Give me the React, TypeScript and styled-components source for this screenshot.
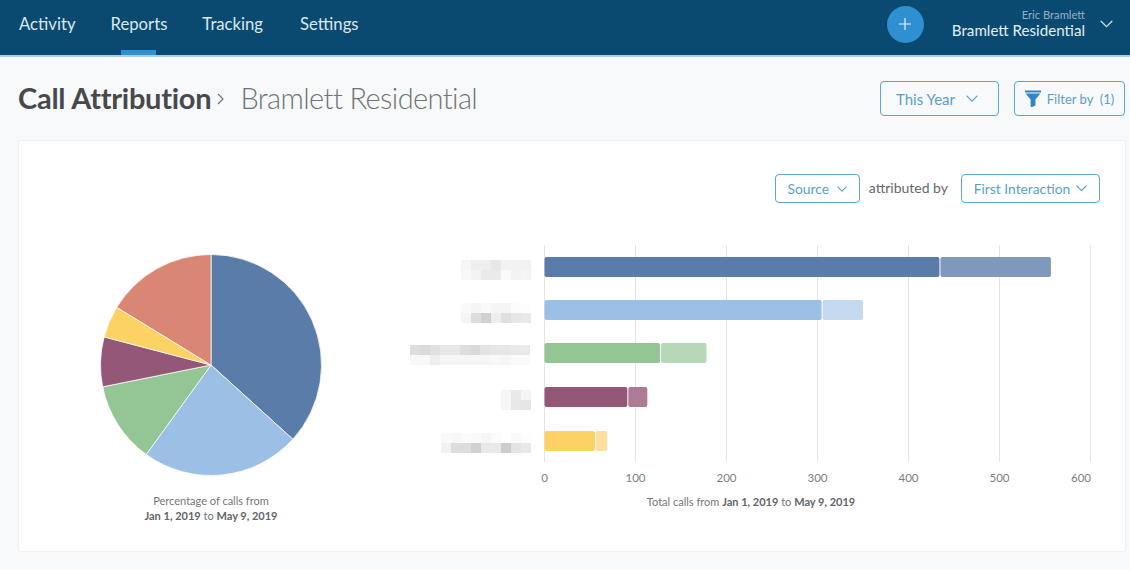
import React from "react";
import styled, { createGlobalStyle } from "styled-components";

const Global = createGlobalStyle`
  html, body { margin: 0; padding: 0; background: #f7f9fb; }
  body { font-family: "Lato", "Open Sans", sans-serif; overflow: hidden; }
`;

const Page = styled.div`
  width: 1130px;
  height: 570px;
  background: #f7f9fb;
  overflow: hidden;
`;

const Header = styled.header`
  height: 55px;
  background: #0b4a70;
  border-bottom: 2px solid #a9cfe6;
  display: flex;
  align-items: center;
  padding: 0 17px 0 19px;
`;

const Nav = styled.nav`
  display: flex;
  gap: 35px;
  height: 100%;
  flex: 1;
`;

const NavItem = styled.a<{ $active?: boolean; $push?: number }>`
  position: relative;
  display: flex;
  align-items: center;
  height: 47px;
  margin-left: ${(p) => p.$push ?? 0}px;
  font-size: 16.7px;
  color: #d9e8f1;
  &::after {
    content: "";
    display: ${(p) => (p.$active ? "block" : "none")};
    position: absolute;
    left: 10px;
    right: 11px;
    top: 50px;
    height: 5px;
    background: #2f90d0;
  }
`;

const AddButton = styled.button`
  width: 37px;
  height: 37px;
  border-radius: 50%;
  border: 0;
  padding: 0;
  margin-right: 28px;
  margin-top: -7px;
  background: #2e8fd1;
  display: flex;
  align-items: center;
  justify-content: center;
`;

const Account = styled.div`
  display: flex;
  flex-direction: column;
  align-items: flex-end;
  margin-top: -7px;
`;

const AccountUser = styled.span`
  font-size: 11.2px;
  line-height: 13px;
  color: #93b2c6;
`;

const AccountName = styled.span`
  font-size: 15.15px;
  line-height: 19px;
  color: #e4eff5;
`;

const AccountChevron = styled.span`
  display: flex;
  margin: -7px 0 0 15px;
`;

const TitleRow = styled.div`
  display: flex;
  align-items: center;
  height: 35px;
  margin-top: 24px;
  padding: 0 5px 0 18px;
`;

const Title = styled.h1`
  margin: 0;
  padding-bottom: 2px;
  font-size: 29px;
  font-weight: 700;
  letter-spacing: -0.25px;
  color: #47494c;
`;

const Crumb = styled.span`
  display: flex;
  margin: 0 16px 0 6px;
`;

const SubTitle = styled.span`
  flex: 1;
  padding-bottom: 2px;
  font-size: 29px;
  font-weight: 300;
  letter-spacing: -0.6px;
  color: #707478;
`;

const OutlineButton = styled.button<{ $h: number; $w: number; $size: number; $gap: number; $right?: number }>`
  height: ${(p) => p.$h}px;
  width: ${(p) => p.$w}px;
  box-sizing: border-box;
  border: 1.5px solid #5ba5d0;
  border-radius: 4px;
  background: transparent;
  color: #5a9fcb;
  font-family: inherit;
  font-size: ${(p) => p.$size}px;
  display: flex;
  align-items: center;
  justify-content: center;
  gap: ${(p) => p.$gap}px;
  padding: 0 ${(p) => p.$right ?? 0}px 0 0;
`;

const ButtonGap = styled.span`
  width: 15px;
`;

const Card = styled.section`
  box-sizing: border-box;
  width: 1108px;
  height: 412px;
  margin: 24px 0 0 18px;
  padding-top: 33px;
  background: #fff;
  border: 1px solid #eef1f4;
  border-radius: 3px;
`;

const Toolbar = styled.div`
  display: flex;
  justify-content: flex-end;
  align-items: center;
  padding-right: 25px;
  height: 29px;
`;

const ToolbarLabel = styled.span`
  font-size: 14px;
  color: #64676b;
  margin: -2px 13px 0 9px;
`;

const ChartRow = styled.div`
  display: flex;
  margin-top: 37px;
`;

const PieColumn = styled.div`
  width: 384px;
  display: flex;
  flex-direction: column;
  align-items: center;
`;

const PieHolder = styled.svg`
  display: block;
  margin-top: 13px;
`;

const Caption = styled.div`
  font-size: 11px;
  line-height: 15px;
  color: #74777b;
  text-align: center;
  b { font-weight: 700; color: #626569; }
`;

const PieCaption = styled(Caption)`
  margin-top: 16px;
`;

const BarColumn = styled.div`
  width: 700px;
  margin-left: 1px;
`;

const BarCaption = styled(Caption)`
  margin: 8px 0 0 0;
  width: 694px;
`;

const Tick = styled.text`
  font-family: "Lato", sans-serif;
  font-size: 11.5px;
  fill: #7d8083;
  text-anchor: middle;
`;

const Chevron = ({ size = 12, color = "#5a9fcb", w = 1.3 }: { size?: number; color?: string; w?: number }) => (
  <svg width={size} height={size * 0.6} viewBox="0 0 12 7" fill="none">
    <path d="M1 1l5 5 5-5" stroke={color} strokeWidth={w} strokeLinecap="round" strokeLinejoin="round" />
  </svg>
);

const slices: [number, number, string][] = [
  [0, 132.2, "#5a7ca9"],
  [132.2, 215.9, "#9cbfe5"],
  [215.9, 258.6, "#93c595"],
  [258.6, 284.7, "#955777"],
  [284.7, 301.5, "#fdd264"],
  [301.5, 360, "#d98675"],
];

const polar = (a: number, r: number, c: number) => {
  const t = (a * Math.PI) / 180;
  return [c + r * Math.sin(t), c - r * Math.cos(t)];
};

const R = 110.5;

const Pie = () => (
  <PieHolder width={224} height={224} viewBox="0 0 224 224">
    {slices.map(([a, b, col]) => {
      const [x1, y1] = polar(a, R, 112);
      const [x2, y2] = polar(b, R, 112);
      return (
        <path
          key={a}
          d={`M112 112L${x1} ${y1}A${R} ${R} 0 ${b - a > 180 ? 1 : 0} 1 ${x2} ${y2}Z`}
          fill={col}
          stroke="#fff"
          strokeOpacity={0.75}
          strokeWidth={1}
        />
      );
    })}
  </PieHolder>
);

/* svg origin: page x 404, y 240 */
const X0 = 140.5;
const S = 0.91;
const bars: { y: number; d: number; l: number; c: string; c2: string }[] = [
  { y: 17, d: 434, l: 556.5, c: "#5a7ca9", c2: "#7f98bb" },
  { y: 60, d: 304.5, l: 350, c: "#9cbfe5", c2: "#c4d8ef" },
  { y: 103, d: 127, l: 178, c: "#93c595", c2: "#b6d8b8" },
  { y: 147, d: 91, l: 113, c: "#955777", c2: "#ae7b95" },
  { y: 191, d: 55.5, l: 69, c: "#fdd264", c2: "#fde0a0" },
];

/* pixelated placeholders for the redacted category labels: start x, then one opacity per cell */
const blurRows: { y: number; cells: number[][] }[] = [
  { y: 20, cells: [[57, 0.05, 0.1, 0.1, 0.14, 0.08, 0.08, 0.08], [57, 0.04, 0.07, 0.12, 0.12, 0.03, 0.07, 0.06]] },
  { y: 63, cells: [[57, 0.03, 0.06, 0.03, 0.06, 0.06, 0.02, 0.01], [57, 0.06, 0.2, 0.28, 0.1, 0.18, 0.15, 0.13]] },
  { y: 105, cells: [[6, 0.2, 0.22, 0.18, 0.14, 0.14, 0.2, 0.22, 0.16, 0.14, 0.14, 0.13, 0.12], [6, 0.04, 0.04, 0.1, 0.05, 0.05, 0.05, 0.05, 0.05, 0.04, 0.05, 0.03, 0.03]] },
  { y: 150, cells: [[97, 0.05, 0.13, 0.06], [97, 0.05, 0.14, 0.15]] },
  { y: 193, cells: [[37, 0.03, 0.04, 0.02, 0.03, 0.05, 0.02, 0, 0.03, 0.01], [37, 0.08, 0.2, 0.2, 0.28, 0.13, 0.13, 0.3, 0.16, 0.13]] },
];

const BarChart = () => (
  <svg width={700} height={246} viewBox="0 0 700 246" style={{ display: "block" }}>
    {[0, 100, 200, 300, 400, 500, 600].map((v) => (
      <line key={v} x1={X0 + v * S} x2={X0 + v * S} y1={5} y2={222} stroke="#e4e5e8" strokeWidth={1} />
    ))}
    {blurRows.map((row) =>
      row.cells.map((cells, ri) => {
        const [sx, ...vals] = cells;
        return vals.map((o, i) => (
          <rect key={`${row.y}-${ri}-${i}`} x={sx + i * 10} y={row.y + ri * 10} width={10} height={10} fill="#555" opacity={o} />
        ));
      })
    )}
    {bars.map((b) => (
      <g key={b.y}>
        <rect x={X0 + b.d * S + 1} y={b.y} width={(b.l - b.d) * S - 1} height={20} rx={2} fill={b.c2} />
        <rect x={X0} y={b.y} width={b.d * S} height={20} rx={2} fill={b.c} />
      </g>
    ))}
    {[0, 100, 200, 300, 400, 500].map((v) => (
      <Tick key={v} x={X0 + v * S} y={242}>{v}</Tick>
    ))}
    <Tick x={677} y={242}>600</Tick>
  </svg>
);

export default function App() {
  return (
    <Page>
      <Global />
      <Header>
        <Nav>
          <NavItem>Activity</NavItem>
          <NavItem $active>Reports</NavItem>
          <NavItem>Tracking</NavItem>
          <NavItem $push={2}>Settings</NavItem>
        </Nav>
        <AddButton aria-label="Add">
          <svg width="14" height="14" viewBox="0 0 14 14" fill="none">
            <path d="M7 1v12M1 7h12" stroke="#e6f2fa" strokeWidth="1.2" />
          </svg>
        </AddButton>
        <Account>
          <AccountUser>Eric Bramlett</AccountUser>
          <AccountName>Bramlett Residential</AccountName>
        </Account>
        <AccountChevron>
          <Chevron size={13} color="#cfe0ea" w={1.2} />
        </AccountChevron>
      </Header>
      <TitleRow>
        <Title>Call Attribution</Title>
        <Crumb>
          <svg width="7" height="12" viewBox="0 0 7 12" fill="none">
            <path d="M1 1l5 5-5 5" stroke="#6b6e72" strokeWidth="1.1" />
          </svg>
        </Crumb>
        <SubTitle>Bramlett Residential</SubTitle>
        <OutlineButton $h={35} $w={119} $size={15} $gap={11} $right={5}>
          This Year <Chevron size={12} />
        </OutlineButton>
        <ButtonGap />
        <OutlineButton $h={35} $w={111} $size={13} $gap={6}>
          <svg width="16" height="17" viewBox="0 0 16 17">
            <path d="M0 0.5h16v2H0zM0.6 3.5h14.8L10.4 9.5V15.5l-3.2 1.5a1 1 0 0 1-1.6-.8V9.5z" fill="#2e86c4" />
          </svg>
          <span>Filter by&nbsp;&nbsp;(1)</span>
        </OutlineButton>
      </TitleRow>
      <Card>
        <Toolbar>
          <OutlineButton $h={29} $w={85} $size={13.8} $gap={8}>
            Source <Chevron size={10} />
          </OutlineButton>
          <ToolbarLabel>attributed by</ToolbarLabel>
          <OutlineButton $h={29} $w={139} $size={13.8} $gap={6}>
            First Interaction <Chevron size={11} />
          </OutlineButton>
        </Toolbar>
        <ChartRow>
          <PieColumn>
            <Pie />
            <PieCaption>
              Percentage of calls from
              <br />
              <b>Jan 1, 2019</b> to <b>May 9, 2019</b>
            </PieCaption>
          </PieColumn>
          <BarColumn>
            <BarChart />
            <BarCaption>
              Total calls from <b>Jan 1, 2019</b> to <b>May 9, 2019</b>
            </BarCaption>
          </BarColumn>
        </ChartRow>
      </Card>
    </Page>
  );
}
